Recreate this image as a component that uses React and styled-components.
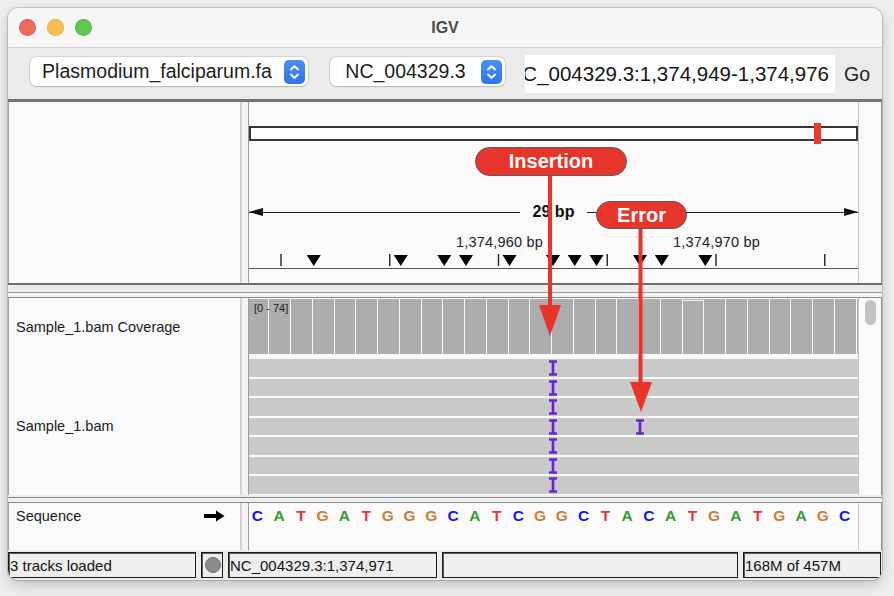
import React from "react";
import styled, { createGlobalStyle } from "styled-components";

// one base = 21.75px on screen, base 0 starts 2.5px left of the data track
const BP = 21.75;
const ORIGIN = -2.5;

const SEQUENCE = "CATGATGGGCATCGGCTACATGATGAGC";
const BASE_COLORS = { A: "#2f9b2f", C: "#1414f2", G: "#d27b33", T: "#ea3535" };
const TICKS = [0, 1, 2, 3, 4, 5].map((n) => 32 + n * 108.75);
const TICK_LABELS = [
  { x: 250.5, text: "1,374,960 bp" },
  { x: 467.5, text: "1,374,970 bp" },
];
const SITES = [3, 7, 9, 10, 12, 14, 15, 16, 18, 19, 21];
const COVERAGE = Array.from({ length: 29 }, (_, i) => ({ id: i, short: i === 20 }));
const READS = [
  { id: 0, ins: [14] },
  { id: 1, ins: [14] },
  { id: 2, ins: [14] },
  { id: 3, ins: [14, 18] },
  { id: 4, ins: [14] },
  { id: 5, ins: [14] },
  { id: 6, ins: [14] },
];

const GlobalStyle = createGlobalStyle`
  html, body {
    margin: 0;
    padding: 0;
    background: #efefef;
  }
  body {
    font-family: "Liberation Sans", Arial, sans-serif;
    color: #111;
  }
`;

const Page = styled.div`
  width: 894px;
  height: 596px;
  box-sizing: border-box;
  padding: 8px 0 0 8px;
  background: #efefef;
  overflow: hidden;
`;

const Window = styled.div`
  position: relative;
  width: 874px;
  height: 572px;
  border-radius: 10px;
  overflow: hidden;
  background: #ececec;
  box-shadow: 0 0 0 1px rgba(0, 0, 0, 0.16), 0 5px 14px rgba(0, 0, 0, 0.2);
  display: flex;
  flex-direction: column;
`;

const TitleBar = styled.div`
  flex: none;
  height: 40px;
  box-sizing: border-box;
  padding: 0 11px;
  display: grid;
  grid-template-columns: 1fr auto 1fr;
  align-items: center;
  background: #f6f6f6;
  border-bottom: 1px solid #d3d3d3;
`;

const Lights = styled.div`
  display: flex;
  gap: 11px;
`;

const Light = styled.span`
  width: 17px;
  height: 17px;
  border-radius: 50%;
  background: ${(p) => p.$color};
  box-shadow: inset 0 0 0 0.5px rgba(0, 0, 0, 0.15);
`;

const Title = styled.div`
  font-size: 16px;
  font-weight: bold;
  color: #4b4b4b;
`;

const Toolbar = styled.div`
  flex: none;
  height: 51px;
  box-sizing: border-box;
  padding-left: 22px;
  display: flex;
  align-items: flex-start;
  background: #ebebeb;
`;

const Select = styled.div`
  width: ${(p) => p.$width}px;
  height: 29px;
  margin: 9px ${(p) => p.$gap}px 0 0;
  box-sizing: border-box;
  padding-right: 3px;
  display: flex;
  align-items: center;
  background: #fff;
  border-radius: 6px;
  box-shadow: 0 0 0 0.5px rgba(0, 0, 0, 0.2), 0 1px 1.5px rgba(0, 0, 0, 0.14);
`;

const SelectText = styled.span`
  flex: 1;
  text-align: center;
  font-size: 19.5px;
  color: #1d1d1d;
  white-space: nowrap;
  overflow: hidden;
`;

const Stepper = styled.span`
  width: 21px;
  height: 24px;
  border-radius: 5px;
  background: linear-gradient(#4b8ef8, #2e73ef);
  display: flex;
  align-items: center;
  justify-content: center;
`;

const LocusField = styled.div`
  width: 310px;
  height: 38px;
  margin-top: 7px;
  box-sizing: border-box;
  padding-right: 6px;
  display: flex;
  justify-content: flex-end;
  align-items: center;
  overflow: hidden;
  background: #fff;
  font-size: 20.5px;
  white-space: nowrap;
  color: #161616;
`;

const GoButton = styled.span`
  margin: 7px 0 0 9px;
  line-height: 38px;
  font-size: 19.5px;
  color: #222;
`;

const PanelRow = styled.div`
  flex: none;
  display: flex;
  height: ${(p) => p.$height}px;
  box-sizing: border-box;
  border-top: ${(p) => (p.$topBorder ? "3px solid #747474" : "none")};
`;

const NameCol = styled.div`
  width: 232px;
  box-sizing: border-box;
  border-left: 1px solid #a3a3a3;
  background: #fafafa;
  display: flex;
  flex-direction: column;
`;

const Divider = styled.div`
  width: 9px;
  box-sizing: border-box;
  border-left: 2px solid #d2d2d2;
  border-right: 1px solid #9c9c9c;
  background: #f3f3f3;
`;

const DataCol = styled.div`
  position: relative;
  width: 609px;
  background: #fafafa;
  display: flex;
  flex-direction: column;
  overflow: hidden;
`;

const Gutter = styled.div`
  width: 24px;
  box-sizing: border-box;
  border-left: 1px solid #c7c7c7;
  border-right: 1px solid #8f8f8f;
  background: #fafafa;
`;

const ScrollThumb = styled.div`
  width: 11px;
  height: 25px;
  margin: 2px 0 0 6px;
  border-radius: 6px;
  background: #c3c3c3;
`;

const Ideogram = styled.div`
  position: relative;
  margin-top: 24px;
  height: 15px;
  box-sizing: border-box;
  border: 2px solid #363636;
  background: #fff;
`;

const IdeogramMark = styled.span`
  position: absolute;
  left: 563px;
  top: -5px;
  width: 7px;
  height: 21px;
  background: #ea3a30;
`;

const Ruler = styled.div`
  margin-top: 63px;
  height: 16px;
  display: flex;
  align-items: center;
`;

const RulerLine = styled.span`
  position: relative;
  flex: 1;
  height: 1px;
  background: #1e1e1e;

  &::after {
    content: "";
    position: absolute;
    top: -4px;
    ${(p) => (p.$side === "left" ? "left: 0;" : "right: 0;")}
    border-top: 4.5px solid transparent;
    border-bottom: 4.5px solid transparent;
    ${(p) =>
      p.$side === "left"
        ? "border-right: 14px solid #111;"
        : "border-left: 14px solid #111;"}
  }
`;

const RulerLabel = styled.span`
  padding: 0 13px;
  font-size: 16px;
  font-weight: bold;
  color: #111;
`;

const TickLabels = styled.div`
  position: relative;
  margin-top: 15px;
  height: 15px;
`;

const TickLabel = styled.span`
  position: absolute;
  top: 0;
  transform: translateX(-50%);
  font-size: 14.5px;
  line-height: 15px;
  letter-spacing: 0.2px;
  color: #222;
  white-space: nowrap;
`;

const TickTrack = styled.svg`
  display: block;
  margin-top: 4px;
  border-bottom: 1px solid #555;
`;

const SplitBar = styled.div`
  flex: none;
  height: 15px;
  background: linear-gradient(
    to bottom,
    #6e6e6e 0 2px,
    #ececec 2px 9px,
    #9a9a9a 9px 10px,
    #f4f4f4 10px 14px,
    #8a8a8a 14px 15px
  );
`;

const ThinSplit = styled.div`
  flex: none;
  height: 8px;
  background: linear-gradient(
    to bottom,
    #ececec 0 2px,
    #8c8c8c 2px 3px,
    #f0f0f0 3px 7px,
    #8c8c8c 7px 8px
  );
`;

const TrackName = styled.div`
  height: ${(p) => (p.$height ? `${p.$height}px` : "auto")};
  flex: ${(p) => (p.$height ? "none" : "1")};
  display: flex;
  align-items: center;
  padding-left: 7px;
  font-size: 14.5px;
  color: #1a1a1a;
`;

const BaseLanes = styled.div`
  display: grid;
  grid-template-columns: repeat(${(p) => p.$count}, ${BP}px);
  margin-left: ${ORIGIN}px;
  height: ${(p) => p.$height}px;
  margin-top: ${(p) => p.$top || 0}px;
`;

const CoverageWrap = styled.div`
  position: relative;
`;

const CoverageBar = styled.div`
  border-left: 1px solid #f6f6f6;
  background: ${(p) =>
    p.$short
      ? "linear-gradient(#acacac 0 1px, #f3f3f3 1px 2.5px, #acacac 2.5px)"
      : "#acacac"};
`;

const CoverageScale = styled.span`
  position: absolute;
  top: 4px;
  left: 5px;
  font-size: 11px;
  color: #222;
`;

const Reads = styled.div`
  margin-top: 5px;
  display: flex;
  flex-direction: column;
  gap: 2px;
`;

const ReadRow = styled.div`
  position: relative;
  height: 17.5px;
  background: #c9c9c9;
`;

const Insertion = styled.svg`
  position: absolute;
  top: 1px;
`;

const SequenceName = styled.div`
  display: flex;
  justify-content: space-between;
  align-items: flex-start;
  padding: 5px 15px 0 7px;
  font-size: 14.5px;
  line-height: 17px;
  color: #1a1a1a;
`;

const Base = styled.span`
  text-align: center;
  font-size: 15.5px;
  font-weight: bold;
  line-height: 26px;
  color: ${(p) => BASE_COLORS[p.$base]};
`;

const StatusBar = styled.div`
  flex: none;
  height: 30px;
  box-sizing: border-box;
  padding: 2px 1px 2px 0;
  display: grid;
  grid-template-columns: 188px 22px 209px 296px 1fr;
  column-gap: 5px;
  background: #ececec;
`;

const StatusBox = styled.div`
  box-sizing: border-box;
  border: 1px solid #1c1c1c;
  box-shadow: inset 1px 1px 0 #5a5a5a;
  background: #efefef;
  padding-left: 1px;
  display: flex;
  align-items: center;
  justify-content: ${(p) => (p.$center ? "center" : "flex-start")};
  font-size: 15px;
  color: #111;
  white-space: nowrap;
  overflow: hidden;
`;

const StatusLamp = styled.span`
  width: 16px;
  height: 16px;
  border-radius: 50%;
  box-sizing: border-box;
  border: 1px solid #6d6d6d;
  background: #8c8c8c;
`;

const Overlay = styled.svg`
  position: absolute;
  left: 0;
  top: 0;
  pointer-events: none;
`;

const Callout = styled.div`
  position: absolute;
  left: ${(p) => p.$x}px;
  top: ${(p) => p.$y}px;
  width: ${(p) => p.$w}px;
  height: ${(p) => p.$h}px;
  box-sizing: border-box;
  border: 1.5px solid #5c5c5c;
  border-radius: 999px;
  background: #e8352b;
  display: flex;
  align-items: center;
  justify-content: center;
  font-size: 20px;
  font-weight: bold;
  color: #fff;
`;

function Chevrons() {
  return (
    <svg width="21" height="24" viewBox="0 0 21 24">
      <path
        d="M7 9.5 L10.5 6 L14 9.5 M7 14.5 L10.5 18 L14 14.5"
        fill="none"
        stroke="#fff"
        strokeWidth="1.8"
        strokeLinecap="round"
        strokeLinejoin="round"
      />
    </svg>
  );
}

function InsertionMark({ left }) {
  return (
    <Insertion width="10" height="16" viewBox="0 0 10 16" style={{ left }}>
      <path d="M1 1.5 H9 M5 1.5 V14.5 M1 14.5 H9" stroke="#6b1fd6" strokeWidth="2.6" fill="none" />
    </Insertion>
  );
}

function RightArrow() {
  return (
    <svg width="21" height="12" viewBox="0 0 21 12" style={{ marginTop: 2 }}>
      <path d="M0 4 H12 V0.5 L20.5 6 L12 11.5 V8 H0 Z" fill="#000" />
    </svg>
  );
}

const baseX = (b) => ORIGIN + b * BP;

export default function App() {
  return (
    <Page>
      <GlobalStyle />
      <Window>
        <TitleBar>
          <Lights>
            <Light $color="#ed6a5e" />
            <Light $color="#f5bf4f" />
            <Light $color="#61c554" />
          </Lights>
          <Title>IGV</Title>
          <span />
        </TitleBar>

        <Toolbar>
          <Select $width={278} $gap={22}>
            <SelectText>Plasmodium_falciparum.fa</SelectText>
            <Stepper>
              <Chevrons />
            </Stepper>
          </Select>
          <Select $width={175} $gap={20}>
            <SelectText>NC_004329.3</SelectText>
            <Stepper>
              <Chevrons />
            </Stepper>
          </Select>
          <LocusField>
            <span>NC_004329.3:1,374,949-1,374,976</span>
          </LocusField>
          <GoButton>Go</GoButton>
        </Toolbar>

        <PanelRow $height={184} $topBorder>
          <NameCol />
          <Divider />
          <DataCol>
            <Ideogram>
              <IdeogramMark />
            </Ideogram>
            <Ruler>
              <RulerLine $side="left" />
              <RulerLabel>29 bp</RulerLabel>
              <RulerLine $side="right" />
            </Ruler>
            <TickLabels>
              {TICK_LABELS.map((t) => (
                <TickLabel key={t.text} style={{ left: t.x }}>
                  {t.text}
                </TickLabel>
              ))}
            </TickLabels>
            <TickTrack width="609" height="14" viewBox="0 0 609 14">
              {TICKS.map((x) => (
                <line key={x} x1={x} x2={x} y1="0" y2="12" stroke="#222" strokeWidth="1.4" />
              ))}
              {SITES.map((b) => {
                const cx = baseX(b) + 2;
                return <polygon key={b} points={`${cx - 7},1 ${cx + 7},1 ${cx},12`} fill="#000" />;
              })}
            </TickTrack>
          </DataCol>
          <Gutter />
        </PanelRow>

        <SplitBar />

        <PanelRow $height={197}>
          <NameCol>
            <TrackName $height={58}>Sample_1.bam Coverage</TrackName>
            <TrackName>Sample_1.bam</TrackName>
          </NameCol>
          <Divider />
          <DataCol>
            <CoverageWrap>
              <BaseLanes $count={29} $height={55} $top={1}>
                {COVERAGE.map((c) => (
                  <CoverageBar key={c.id} $short={c.short} />
                ))}
              </BaseLanes>
              <CoverageScale>[0 - 74]</CoverageScale>
            </CoverageWrap>
            <Reads>
              {READS.map((r) => (
                <ReadRow key={r.id}>
                  {r.ins.map((b) => (
                    <InsertionMark key={b} left={baseX(b) + 2 - 5} />
                  ))}
                </ReadRow>
              ))}
            </Reads>
          </DataCol>
          <Gutter>
            <ScrollThumb />
          </Gutter>
        </PanelRow>

        <ThinSplit />

        <PanelRow $height={47}>
          <NameCol>
            <SequenceName>
              <span>Sequence</span>
              <RightArrow />
            </SequenceName>
          </NameCol>
          <Divider />
          <DataCol>
            <BaseLanes $count={28} $height={26}>
              {SEQUENCE.split("").map((b, i) => (
                <Base key={i} $base={b}>
                  {b}
                </Base>
              ))}
            </BaseLanes>
          </DataCol>
          <Gutter />
        </PanelRow>

        <StatusBar>
          <StatusBox>3 tracks loaded</StatusBox>
          <StatusBox $center>
            <StatusLamp />
          </StatusBox>
          <StatusBox>NC_004329.3:1,374,971</StatusBox>
          <StatusBox />
          <StatusBox>168M of 457M</StatusBox>
        </StatusBar>

        <Overlay width="874" height="572" viewBox="0 0 874 572">
          <line x1="542" y1="166" x2="542" y2="300" stroke="#e8332b" strokeWidth="4" />
          <polygon points="531,297 553,297 542,328" fill="#e8332b" />
          <line x1="632.5" y1="219" x2="632.5" y2="377" stroke="#e8332b" strokeWidth="4" />
          <polygon points="622,374 644,374 633,404" fill="#e8332b" />
        </Overlay>
        <Callout $x={467} $y={139} $w={152} $h={29}>
          Insertion
        </Callout>
        <Callout $x={588} $y={193} $w={91} $h={28}>
          Error
        </Callout>
      </Window>
    </Page>
  );
}
